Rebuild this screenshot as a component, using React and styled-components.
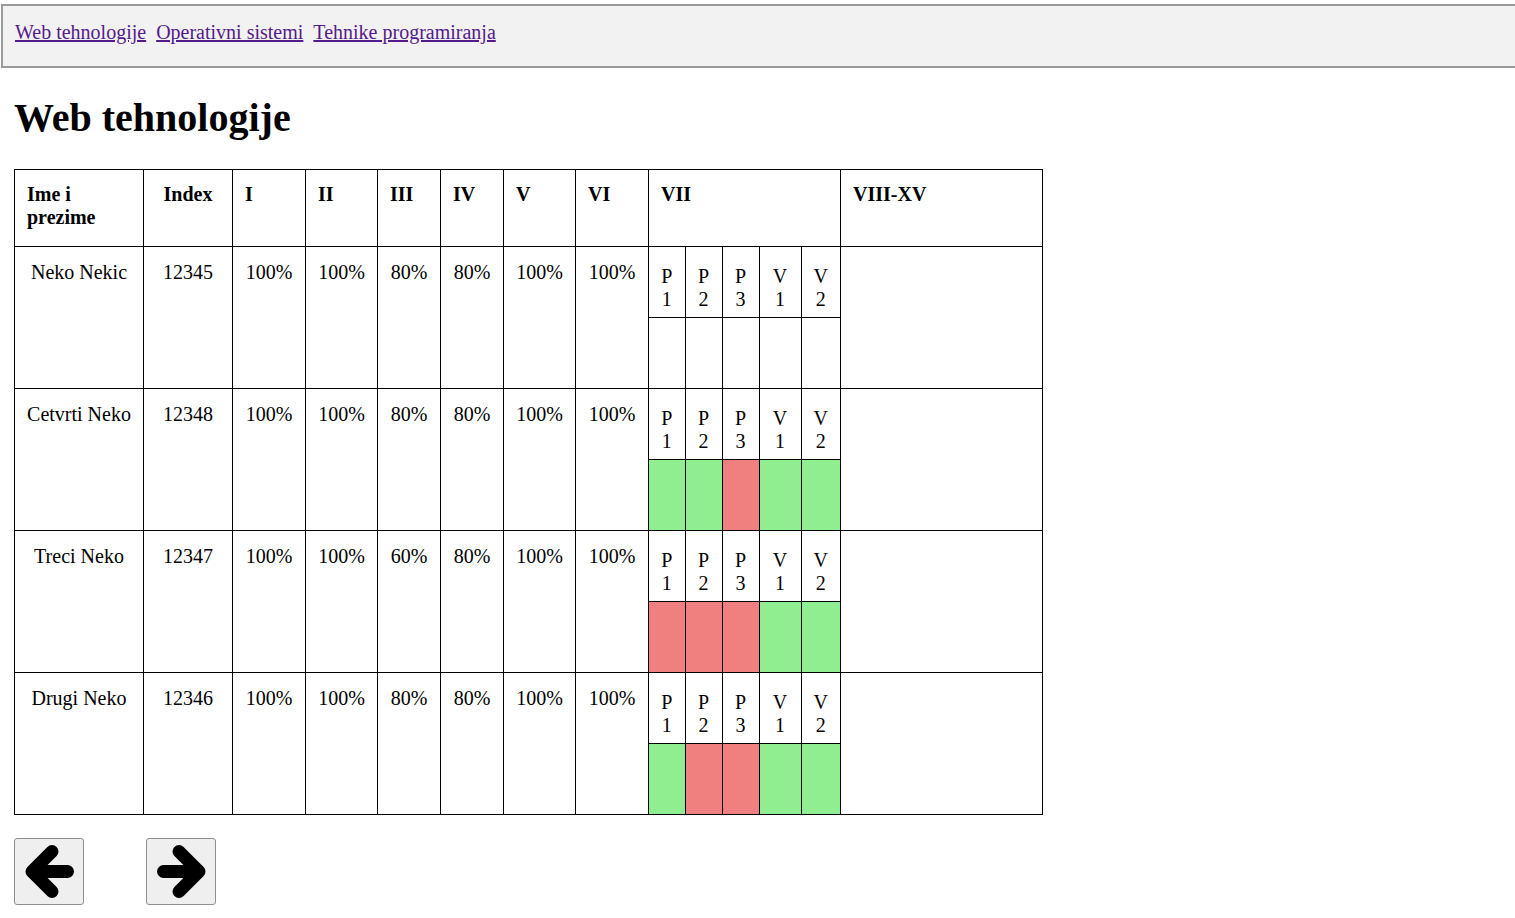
import React from "react";
import styled, { createGlobalStyle } from "styled-components";

const GlobalStyle = createGlobalStyle`
  html, body {
    margin: 0;
    padding: 0;
    background: #fff;
    overflow-x: hidden;
  }
  body {
    font-family: "Liberation Serif", "Times New Roman", serif;
    font-size: 20px;
    color: #000;
  }
`;

const Nav = styled.nav`
  margin: 4px 0 0 1px;
  box-sizing: border-box;
  width: calc(100% + 10px);
  height: 64px;
  padding: 15px 12px 0;
  background: #f2f2f2;
  border: 2px solid #999;
  display: flex;
  gap: 10px;
  align-items: flex-start;
`;

const NavLink = styled.a`
  color: #551a8b;
  text-decoration: underline;
  font-size: 20px;
  line-height: 23px;
`;

const Title = styled.h1`
  font-size: 40px;
  line-height: 46px;
  font-weight: bold;
  margin: 27px 0 28px 14px;
`;

const Table = styled.table`
  margin-left: 14px;
  border-collapse: collapse;
  table-layout: fixed;
  width: 1028px;
`;

const HeadRow = styled.tr`
  height: 77px;
`;

const BodyRow = styled.tr`
  height: 142px;
`;

const Th = styled.th`
  border: 1px solid #000;
  padding: 13px 12px 9px;
  vertical-align: top;
  text-align: ${(p) => (p.$center ? "center" : "left")};
  font-weight: bold;
  line-height: 23px;
`;

const Td = styled.td`
  border: 1px solid #000;
  padding: 14px 12px 10px;
  vertical-align: top;
  text-align: center;
  line-height: 23px;
  white-space: nowrap;
`;

const SplitTd = styled.td`
  border: 1px solid #000;
  padding: 0;
  vertical-align: top;
`;

const Inner = styled.table`
  border-collapse: collapse;
  border-style: hidden;
  table-layout: fixed;
  width: 100%;
`;

const InnerRow = styled.tr`
  height: ${(p) => p.$h}px;
`;

const LabelCell = styled.td`
  border: 1px solid #000;
  padding: 18px 0 0;
  vertical-align: top;
  text-align: center;
  line-height: 23px;
`;

const MarkCell = styled.td`
  border: 1px solid #000;
  padding: 0;
  background: ${(p) =>
    p.$state === "ok" ? "#90ee90" : p.$state === "fail" ? "#f08080" : "#fff"};
`;

const Pager = styled.div`
  display: flex;
  gap: 62px;
  margin: 23px 0 0 14px;
`;

const ArrowButton = styled.button`
  width: 70px;
  height: 67px;
  padding: 0;
  background: #efefef;
  border: 1px solid #8f8f8f;
  border-radius: 3px;
  display: flex;
  align-items: center;
  justify-content: center;
`;

const Arrow = ({ dir }) => (
  <svg width="49" height="53" viewBox="0 0 49 53">
    <g
      transform={dir === "right" ? "translate(49 0) scale(-1 1)" : undefined}
      fill="none"
      stroke="#000"
      strokeWidth="13"
      strokeLinecap="round"
      strokeLinejoin="round"
    >
      <path d="M42.5 26.5 H7 M27 6.5 L7 26.5 L27 46.5" />
    </g>
  </svg>
);

const colWidths = [129, 89, 73, 72, 63, 63, 72, 73, 192, 202];
const innerWidths = [36, 37, 37, 42, 39];
const labels = [
  ["P", "1"],
  ["P", "2"],
  ["P", "3"],
  ["V", "1"],
  ["V", "2"],
];

const students = [
  { name: "Neko Nekic", index: "12345", scores: ["100%", "100%", "80%", "80%", "100%", "100%"], marks: [null, null, null, null, null] },
  { name: "Cetvrti Neko", index: "12348", scores: ["100%", "100%", "80%", "80%", "100%", "100%"], marks: ["ok", "ok", "fail", "ok", "ok"] },
  { name: "Treci Neko", index: "12347", scores: ["100%", "100%", "60%", "80%", "100%", "100%"], marks: ["fail", "fail", "fail", "ok", "ok"] },
  { name: "Drugi Neko", index: "12346", scores: ["100%", "100%", "80%", "80%", "100%", "100%"], marks: ["ok", "fail", "fail", "ok", "ok"] },
];

const App = () => {
  return (
    <>
      <GlobalStyle />
      <Nav>
        <NavLink href="#">Web tehnologije</NavLink>
        <NavLink href="#">Operativni sistemi</NavLink>
        <NavLink href="#">Tehnike programiranja</NavLink>
      </Nav>
      <Title>Web tehnologije</Title>
      <Table>
        <colgroup>
          {colWidths.map((w, i) => (
            <col key={i} style={{ width: w }} />
          ))}
        </colgroup>
        <thead>
          <HeadRow>
            <Th>Ime i prezime</Th>
            <Th $center>Index</Th>
            <Th>I</Th>
            <Th>II</Th>
            <Th>III</Th>
            <Th>IV</Th>
            <Th>V</Th>
            <Th>VI</Th>
            <Th>VII</Th>
            <Th>VIII-XV</Th>
          </HeadRow>
        </thead>
        <tbody>
          {students.map((s) => (
            <BodyRow key={s.index}>
              <Td>{s.name}</Td>
              <Td>{s.index}</Td>
              {s.scores.map((sc, i) => (
                <Td key={i}>{sc}</Td>
              ))}
              <SplitTd>
                <Inner>
                  <colgroup>
                    {innerWidths.map((w, i) => (
                      <col key={i} style={{ width: w }} />
                    ))}
                  </colgroup>
                  <tbody>
                    <InnerRow $h={70}>
                      {labels.map(([a, b], i) => (
                        <LabelCell key={i}>
                          {a}
                          <br />
                          {b}
                        </LabelCell>
                      ))}
                    </InnerRow>
                    <InnerRow $h={71}>
                      {s.marks.map((m, i) => (
                        <MarkCell key={i} $state={m} />
                      ))}
                    </InnerRow>
                  </tbody>
                </Inner>
              </SplitTd>
              <Td />
            </BodyRow>
          ))}
        </tbody>
      </Table>
      <Pager>
        <ArrowButton>
          <Arrow dir="left" />
        </ArrowButton>
        <ArrowButton>
          <Arrow dir="right" />
        </ArrowButton>
      </Pager>
    </>
  );
};

export default App;
